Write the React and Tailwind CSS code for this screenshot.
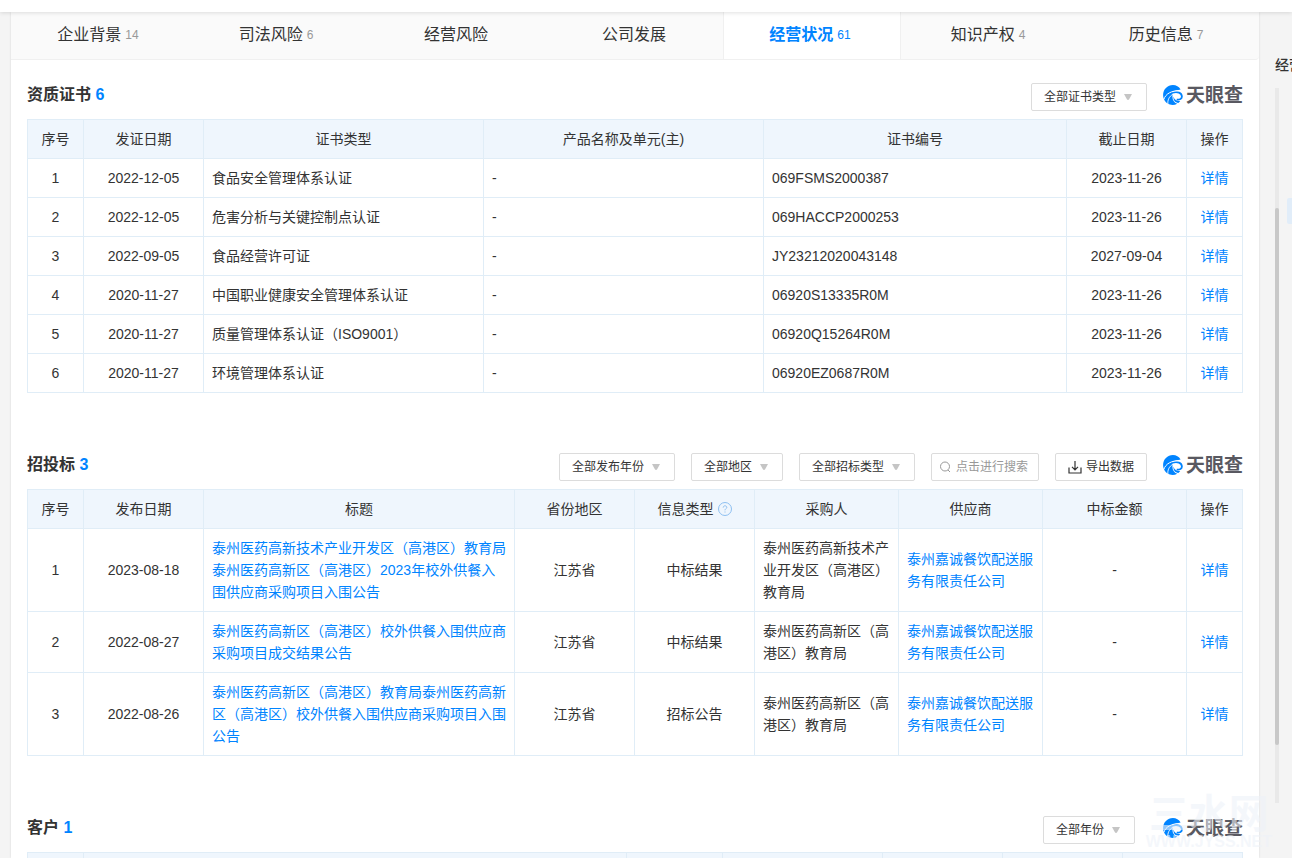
import { useState } from "react";

const tabs = [
    { name: "企业背景", count: 14 },
    { name: "司法风险", count: 6 },
    { name: "经营风险" },
    { name: "公司发展" },
    { name: "经营状况", count: 61 },
    { name: "知识产权", count: 4 },
    { name: "历史信息", count: 7 },
];

const certs = [
    ["2022-12-05", "食品安全管理体系认证", "069FSMS2000387", "2023-11-26"],
    ["2022-12-05", "危害分析与关键控制点认证", "069HACCP2000253", "2023-11-26"],
    ["2022-09-05", "食品经营许可证", "JY23212020043148", "2027-09-04"],
    ["2020-11-27", "中国职业健康安全管理体系认证", "06920S13335R0M", "2023-11-26"],
    ["2020-11-27", "质量管理体系认证（ISO9001）", "06920Q15264R0M", "2023-11-26"],
    ["2020-11-27", "环境管理体系认证", "06920EZ0687R0M", "2023-11-26"],
];

const bids = [
    {
        date: "2023-08-18",
        title: "泰州医药高新技术产业开发区（高港区）教育局泰州医药高新区（高港区）2023年校外供餐入围供应商采购项目入围公告",
        type: "中标结果",
        buyer: "泰州医药高新技术产业开发区（高港区）教育局",
    },
    {
        date: "2022-08-27",
        title: "泰州医药高新区（高港区）校外供餐入围供应商采购项目成交结果公告",
        type: "中标结果",
        buyer: "泰州医药高新区（高港区）教育局",
    },
    {
        date: "2022-08-26",
        title: "泰州医药高新区（高港区）教育局泰州医药高新区（高港区）校外供餐入围供应商采购项目入围公告",
        type: "招标公告",
        buyer: "泰州医药高新区（高港区）教育局",
    },
];

function Logo() {
    return (
        <div className="flex h-6 items-center gap-[3px]">
            <svg viewBox="0 0 20 20" className="h-5 w-5" fill="none">
                {/* crescent, left body and foot */}
                <path
                    fill="#0084ff"
                    d="M17.600 4.400C16 1.800 13.200.1 9.900.1 4.500.1.1 4.500.1 10c0 4.500 2.800 8.300 6.900 9.600 2.400.7 5 .4 7.200-.8-3.400-1.500-5.100-4.200-4.700-8.300l.5-4.200z"
                />
                {/* hook on the right */}
                <path stroke="#0084ff" strokeWidth="1.800" d="M9.500 7.700c4.800-1.600 9.300.2 9.400 3.800 0 2.200-2 3.500-5.200 3.100" />
                <path fill="#0084ff" d="M10.600 11.500c.5 3 2.800 4.800 6.600 4.500-.5.800-1.100 1.400-1.800 1.900-3.200-.3-5.500-2.900-4.800-6.400z" />
                {/* white streaks */}
                <path stroke="#fff" strokeWidth="1" d="M.8 14.500C2.500 9 8 5.300 18.500 5.500" />
                <path stroke="#fff" strokeWidth=".9" d="M4.900 19.400c-.5-4.300 1.200-8.100 5-10" />
            </svg>
            <span className="pt-0.5 text-[19px] leading-6 font-bold text-[#595961]">天眼查</span>
        </div>
    );
}

function FilterSelect({ label }) {
    return (
        <div className="relative">
            <select
                aria-label={label}
                className="block h-7 appearance-none rounded-xs border border-[#dcdcdc] bg-white pr-[29px] pl-3 text-xs text-[#333]"
            >
                <option>{label}</option>
            </select>
            <svg viewBox="0 0 8 6" className="pointer-events-none absolute top-[11px] right-[15px] h-[6px] w-2">
                <path d="M0 0h8L5 5.500q-1 .8-2 0z" fill="#c5c5c5" />
            </svg>
        </div>
    );
}

function Section({ title, count, tools, children }) {
    return (
        <section className="mb-[60px]">
            <div className="mb-2 flex items-start gap-4">
                <h2 className="mr-auto text-base leading-6 font-bold text-[#333]">
                    {title} <span className="text-[#0084ff]">{count}</span>
                </h2>
                {tools}
                <Logo />
            </div>
            {children}
        </section>
    );
}

function Table({ cols, heads, children }) {
    return (
        <table className="w-full table-fixed border-collapse text-sm leading-[22px]">
            <colgroup>
                {cols.map((c, i) => (
                    <col key={i} className={c} />
                ))}
            </colgroup>
            <thead>
                <tr className="bg-[#eff6fd]">
                    {heads.map((h, i) => (
                        <th key={i} className="h-[39px] border border-[#e0edf7] px-2 py-2 font-normal">
                            {h}
                        </th>
                    ))}
                </tr>
            </thead>
            <tbody>{children}</tbody>
        </table>
    );
}

function Cell({ left, children }) {
    return (
        <td className={left ? "border border-[#e0edf7] p-2 text-left" : "border border-[#e0edf7] p-2 text-center"}>
            {children}
        </td>
    );
}

function Link({ children }) {
    return (
        <a href="#" className="text-[#0084ff]">
            {children}
        </a>
    );
}

function InfoTypeHead() {
    return (
        <span className="flex items-center justify-center gap-1">
            信息类型
            <svg viewBox="0 0 14 14" className="h-[14px] w-[14px]" fill="none" stroke="#8dbff0">
                <circle cx="7" cy="7" r="6.500" />
                <path d="M5.200 5.600c0-1.100.8-1.800 1.800-1.800s1.800.7 1.800 1.600c0 1.200-1.800 1.300-1.800 2.900M7 9.500v1" />
            </svg>
        </span>
    );
}

function tabClass(tab, active) {
    if (tab.name === active) {
        return "flex items-center justify-center gap-1 border-x border-[#f0f0f0] bg-white pr-1 pb-0.5 text-base font-bold text-[#0084ff]";
    }
    // the counter hangs to the right, so the label is pulled back a little
    if (tab.count) {
        return "flex items-center justify-center gap-1 pr-1 pb-0.5 text-base text-[#333]";
    }
    return "flex items-center justify-center pb-0.5 text-base text-[#333]";
}

export default function App() {
    const [active, setActive] = useState("经营状况");
    const [keyword, setKeyword] = useState("");

    return (
        <div className="flex h-screen flex-col overflow-hidden bg-[#f4f4f4] font-['Liberation_Sans','Noto_Sans_CJK_SC',sans-serif] text-[#333]">
            <header className="relative z-10 h-3 shrink-0 bg-white shadow-[0_1px_4px_rgba(0,0,0,0.12)]" />

            <div className="flex min-h-0 flex-1">
                <main className="ml-[11px] min-w-0 flex-1 bg-white shadow-[0_0_2px_rgba(0,0,0,0.12)]">
                    <nav className="grid h-12 grid-cols-7 rounded-br border-b border-[#f0f0f0] bg-[#fafafa] pr-0.5">
                        {tabs.map((tab) => (
                            <button key={tab.name} onClick={() => setActive(tab.name)} className={tabClass(tab, active)}>
                                {tab.name}
                                {tab.count && (
                                    <span className={tab.name === active ? "text-xs font-normal" : "text-xs text-[#999]"}>
                                        {tab.count}
                                    </span>
                                )}
                            </button>
                        ))}
                    </nav>

                    <div className="px-4 pt-[23px]">
                        <Section title="资质证书" count={6} tools={<FilterSelect label="全部证书类型" />}>
                            <Table
                                cols={["w-[56px]", "w-[120px]", "w-[280px]", "w-[280px]", "", "w-[120px]", "w-[56px]"]}
                                heads={["序号", "发证日期", "证书类型", "产品名称及单元(主)", "证书编号", "截止日期", "操作"]}
                            >
                                {certs.map(([date, type, no, end], i) => (
                                    <tr key={no}>
                                        <Cell>{i + 1}</Cell>
                                        <Cell>{date}</Cell>
                                        <Cell left>{type}</Cell>
                                        <Cell left>-</Cell>
                                        <Cell left>{no}</Cell>
                                        <Cell>{end}</Cell>
                                        <Cell>
                                            <Link>详情</Link>
                                        </Cell>
                                    </tr>
                                ))}
                            </Table>
                        </Section>

                        <Section
                            title="招投标"
                            count={3}
                            tools={
                                <>
                                    <FilterSelect label="全部发布年份" />
                                    <FilterSelect label="全部地区" />
                                    <FilterSelect label="全部招标类型" />
                                    <div className="relative">
                                        <svg
                                            viewBox="0 0 12 12"
                                            className="absolute top-2 left-2 h-3 w-3"
                                            fill="none"
                                            stroke="#999"
                                        >
                                            <circle cx="6" cy="5.500" r="4.500" />
                                            <path d="M9 9l2 2" />
                                        </svg>
                                        <input
                                            aria-label="搜索"
                                            placeholder="点击进行搜索"
                                            value={keyword}
                                            onChange={(e) => setKeyword(e.target.value)}
                                            className="block h-7 w-[108px] rounded-xs border border-[#dcdcdc] pl-6 text-xs placeholder:text-[#999]"
                                        />
                                    </div>
                                    <button className="flex h-7 items-center gap-1 rounded-xs border border-[#dcdcdc] px-3 text-xs">
                                        <svg viewBox="0 0 14 14" className="h-[14px] w-[14px]" fill="none" stroke="#333" strokeWidth="1.200">
                                            <path d="M1 7.500V13h12V7.500M7 1v8.500M4 6.800L7 9.800l3-3" />
                                        </svg>
                                        导出数据
                                    </button>
                                </>
                            }
                        >
                            <Table
                                cols={[
                                    "w-[56px]",
                                    "w-[120px]",
                                    "",
                                    "w-[120px]",
                                    "w-[120px]",
                                    "w-[144px]",
                                    "w-[144px]",
                                    "w-[144px]",
                                    "w-[56px]",
                                ]}
                                heads={["序号", "发布日期", "标题", "省份地区", <InfoTypeHead />, "采购人", "供应商", "中标金额", "操作"]}
                            >
                                {bids.map((bid, i) => (
                                    <tr key={bid.date}>
                                        <Cell>{i + 1}</Cell>
                                        <Cell>{bid.date}</Cell>
                                        <Cell left>
                                            <Link>{bid.title}</Link>
                                        </Cell>
                                        <Cell>江苏省</Cell>
                                        <Cell>{bid.type}</Cell>
                                        <Cell left>{bid.buyer}</Cell>
                                        <Cell left>
                                            <Link>泰州嘉诚餐饮配送服务有限责任公司</Link>
                                        </Cell>
                                        <Cell>-</Cell>
                                        <Cell>
                                            <Link>详情</Link>
                                        </Cell>
                                    </tr>
                                ))}
                            </Table>
                        </Section>

                        <Section
                            title="客户"
                            count={1}
                            tools={
                                <div className="pr-3">
                                    <FilterSelect label="全部年份" />
                                </div>
                            }
                        >
                            <Table
                                cols={["w-[56px]", "", "w-[96px]", "w-[160px]", "w-[120px]", "w-[120px]", "w-[120px]"]}
                                heads={["", "", "", "", "", "", ""]}
                            />
                        </Section>
                    </div>
                </main>

                <aside className="w-[33px] overflow-hidden pt-[42px] pl-4">
                    <div className="mb-3 text-sm leading-[22px] font-medium whitespace-nowrap">经营状况</div>
                    <div className="flex gap-2">
                        <div className="h-[715px] w-1 shrink-0 bg-[#e9e9e9] pt-[120px]">
                            <div className="h-[537px] rounded-xs bg-[#c8c8c8]" />
                        </div>
                        <div className="mt-[110px] h-[26px] flex-1 rounded-l-xs bg-[#e1edf9]" />
                    </div>
                </aside>
            </div>

            {/* site watermark */}
            <div className="pointer-events-none absolute right-5 bottom-2 z-20 text-center font-bold text-[#eef2f9]/60">
                <div className="text-[40px] leading-10">三水网</div>
                <div className="text-base leading-4">WWW.JYSS.NET</div>
            </div>
        </div>
    );
}
